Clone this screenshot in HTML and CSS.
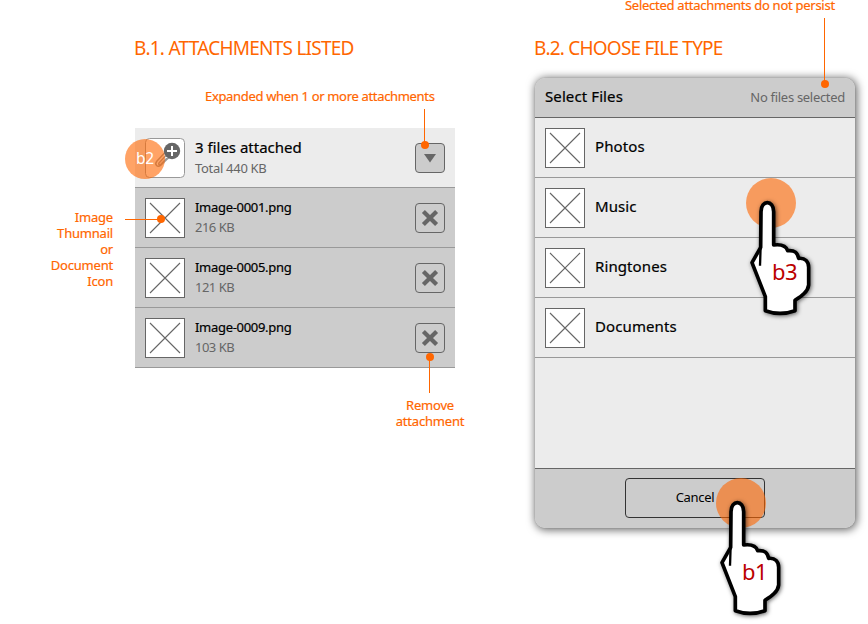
FILE: index.html
```html
<!DOCTYPE html>
<html lang="en">
<head>
<meta charset="utf-8">
<title>Attachments wireframe</title>
<link rel="stylesheet" href="styles.css">
</head>
<body>
<svg class="defs" aria-hidden="true">
  <symbol id="cross-box" viewBox="0 0 40 40">
    <rect x=".5" y=".5" width="39" height="39" fill="#fff" stroke="#666"/>
    <path d="M5 5 35 35M35 5 5 35" stroke="#666" stroke-width="1.1"/>
  </symbol>
  <symbol id="remove" viewBox="0 0 28 28">
    <path d="m7.4 7.4 13.2 13.2M20.6 7.4 7.4 20.6" stroke="#666" stroke-width="4.2"/>
  </symbol>
  <symbol id="hand" viewBox="0 0 240 390">
    <path d="M63 65C63 29 101 29 101 65V165C125 162 138 167 143 182C165 180 172 188 176 205C196 203 206 215 206 232V285C204 305 185 318 165 331V362Q120 378 76 362V320L36 218 62 172Z" fill="#fff" stroke="#000" stroke-width="11" stroke-linejoin="round"/>
    <path d="M62 165 60 227" fill="none" stroke="#000" stroke-width="7"/>
  </symbol>
</svg>
<main class="board">
  <section class="column">
    <h1 class="title">B.1. ATTACHMENTS LISTED</h1>
    <div class="attachments">
      <div class="row summary">
        <svg class="thumb" viewBox="0 0 40 40">
          <rect x=".5" y=".5" width="39" height="39" rx="4" fill="#fff" stroke="#999"/>
          <path d="M20 14.5 12 23c-3 3.500.5 7 3.800 4.200L26 17.500M21 17.500 14 25c-1 1.500.5 2.500 1.800 1.300l6-6" fill="none" stroke="#999" stroke-width="1.500"/>
          <circle cx="27" cy="13" r="8.200" fill="#666"/>
          <path d="M27 8v10M22 13h10" stroke="#fff" stroke-width="2"/>
        </svg>
        <div class="info"><div class="name">3 files attached</div><div class="meta">Total 440 KB</div></div>
        <button class="square filled"><svg viewBox="0 0 28 28"><path d="M8 10h12l-6 8.5z" fill="#666"/></svg></button>
      </div>
      <div class="row file">
        <svg class="thumb"><use href="#cross-box"/></svg>
        <div class="info"><div class="name">Image-0001.png</div><div class="meta">216 KB</div></div>
        <button class="square"><svg><use href="#remove"/></svg></button>
      </div>
      <div class="row file">
        <svg class="thumb"><use href="#cross-box"/></svg>
        <div class="info"><div class="name">Image-0005.png</div><div class="meta">121 KB</div></div>
        <button class="square"><svg><use href="#remove"/></svg></button>
      </div>
      <div class="row file">
        <svg class="thumb"><use href="#cross-box"/></svg>
        <div class="info"><div class="name">Image-0009.png</div><div class="meta">103 KB</div></div>
        <button class="square"><svg><use href="#remove"/></svg></button>
      </div>
    </div>
  </section>
  <section class="column">
    <h1 class="title tight">B.2. CHOOSE FILE TYPE</h1>
    <div class="dialog">
      <header class="bar"><span class="heading">Select Files</span><span class="status">No files selected</span></header>
      <div class="types">
        <div class="row type"><svg class="thumb"><use href="#cross-box"/></svg><span class="label">Photos</span></div>
        <div class="row type"><svg class="thumb"><use href="#cross-box"/></svg><span class="label">Music</span></div>
        <div class="row type"><svg class="thumb"><use href="#cross-box"/></svg><span class="label">Ringtones</span></div>
        <div class="row type"><svg class="thumb"><use href="#cross-box"/></svg><span class="label">Documents</span></div>
      </div>
      <footer class="footer"><button class="cancel">Cancel</button></footer>
    </div>
  </section>

  <div class="note note-expanded">Expanded when 1 or more attachments</div>
  <div class="note note-thumb">Image<br>Thumnail<br>or<br>Document<br>Icon</div>
  <div class="note note-remove">Remove<br>attachment</div>
  <div class="note note-persist">Selected attachments do not persist</div>
  <svg class="overlay" viewBox="0 0 868 624">
    <g fill="#f60">
      <path d="M424 109h1v36h-1zM125 219h36v1h-36zM429 357h1v36h-1zM824 18h1v66h-1z"/>
      <circle cx="425" cy="145" r="4"/>
      <circle cx="161" cy="219" r="4"/>
      <circle cx="430" cy="357" r="4"/>
      <circle cx="825" cy="84" r="4"/>
      <g fill-opacity=".6">
        <circle cx="145" cy="159" r="20"/>
        <circle cx="771" cy="203" r="25"/>
        <circle cx="741" cy="503" r="25"/>
      </g>
    </g>
  </svg>
  <div class="tap tap-b2">b2</div>
  <div class="pointer pointer-b3"><svg><use href="#hand"/></svg><span>b3</span></div>
  <div class="pointer pointer-b1"><svg><use href="#hand"/></svg><span>b1</span></div>
</main>
</body>
</html>
```
FILE: styles.css
```css
* { box-sizing: border-box; }
body {
  margin: 0;
  background: #fff;
  color: #000;
  font: 13px/20px "Noto Sans", "Open Sans", sans-serif;
  letter-spacing: -.3px;
}
.defs { position: absolute; width: 0; height: 0; }
.board {
  position: relative;
  width: 868px;
  height: 624px;
  overflow: hidden;
  display: flex;
  gap: 80px;
  padding: 35px 13px 0 135px;
}
.column { width: 320px; flex: none; }
.title {
  margin: 0 0 0 -1px;
  font-size: 19px;
  line-height: 27px;
  font-weight: 400;
  letter-spacing: -.75px;
  color: #f60;
  white-space: nowrap;
}
.title.tight { letter-spacing: -.78px; }
.attachments { margin-top: 66px; }
.row {
  display: flex;
  gap: 10px;
  height: 60px;
  padding: 10px 10px 0;
  border-bottom: 1px solid #999;
  background: #ececec;
}
.row.file { background: #ccc; }
.thumb { width: 40px; height: 40px; flex: none; }
.info { flex: 1; margin-top: -1px; }
.name { -webkit-text-stroke: .2px #000; }
.meta { color: #666; }
.file .meta { letter-spacing: -.5px; }
.summary .info { line-height: 21px; }
.summary .name { font-size: 15px; letter-spacing: 0; }
button { font: inherit; letter-spacing: inherit; color: inherit; background: none; padding: 0; }
.square {
  width: 30px;
  height: 30px;
  margin-top: 5px;
  border: 1px solid #666;
  border-radius: 4px;
}
.square.filled { background: #ccc; }
.square svg { display: block; width: 28px; height: 28px; }
.dialog {
  display: flex;
  flex-direction: column;
  height: 450px;
  margin-top: 16px;
  border-radius: 10px;
  background: #ececec;
  overflow: hidden;
  box-shadow: 0 0 1px rgba(0,0,0,.3), 1px 1px 8px 1px rgba(0,0,0,.6);
}
.bar {
  display: flex;
  justify-content: space-between;
  height: 40px;
  padding: 9px 10px 0;
  background: #ccc;
  border-bottom: 1px solid #666;
}
.heading, .label { font-size: 15px; letter-spacing: .1px; -webkit-text-stroke: .2px #000; }
.heading { margin-top: -1px; }
.status { color: #666; }
.types { flex: 1; }
.label { line-height: 36px; }
.footer {
  height: 60px;
  padding-top: 9px;
  text-align: center;
  background: #ccc;
  border-top: 1px solid #666;
}
.cancel {
  width: 140px;
  height: 40px;
  padding-bottom: 2px;
  border: 1px solid #333;
  border-radius: 4px;
}
.note {
  position: absolute;
  color: #f60;
  line-height: 16px;
  white-space: nowrap;
  -webkit-text-stroke: .2px #f60;
}
.note-expanded { left: 205px; top: 88px; letter-spacing: -.33px; }
.note-thumb { right: 755px; top: 209px; text-align: right; letter-spacing: -.2px; }
.note-remove { left: 390px; top: 397px; width: 80px; text-align: center; letter-spacing: -.2px; }
.note-persist { left: 625px; top: -3px; letter-spacing: -.27px; }
.overlay { position: absolute; inset: 0; width: 868px; height: 624px; }
.tap {
  position: absolute;
  left: 125px;
  top: 138px;
  width: 40px;
  line-height: 40px;
  text-align: center;
  font-size: 15.5px;
  color: #fff;
}
.pointer { position: absolute; width: 80px; height: 130px; }
.pointer svg {
  display: block;
  width: 80px;
  height: 130px;
  overflow: visible;
  filter: drop-shadow(1px 1px 2px rgba(0,0,0,.6));
}
.pointer span {
  position: absolute;
  left: 32px;
  top: 66px;
  font-size: 22px;
  line-height: 30px;
  letter-spacing: -.6px;
  color: #b00;
}
.pointer-b3 { left: 740px; top: 190px; }
.pointer-b1 { left: 710px; top: 490px; }
```
